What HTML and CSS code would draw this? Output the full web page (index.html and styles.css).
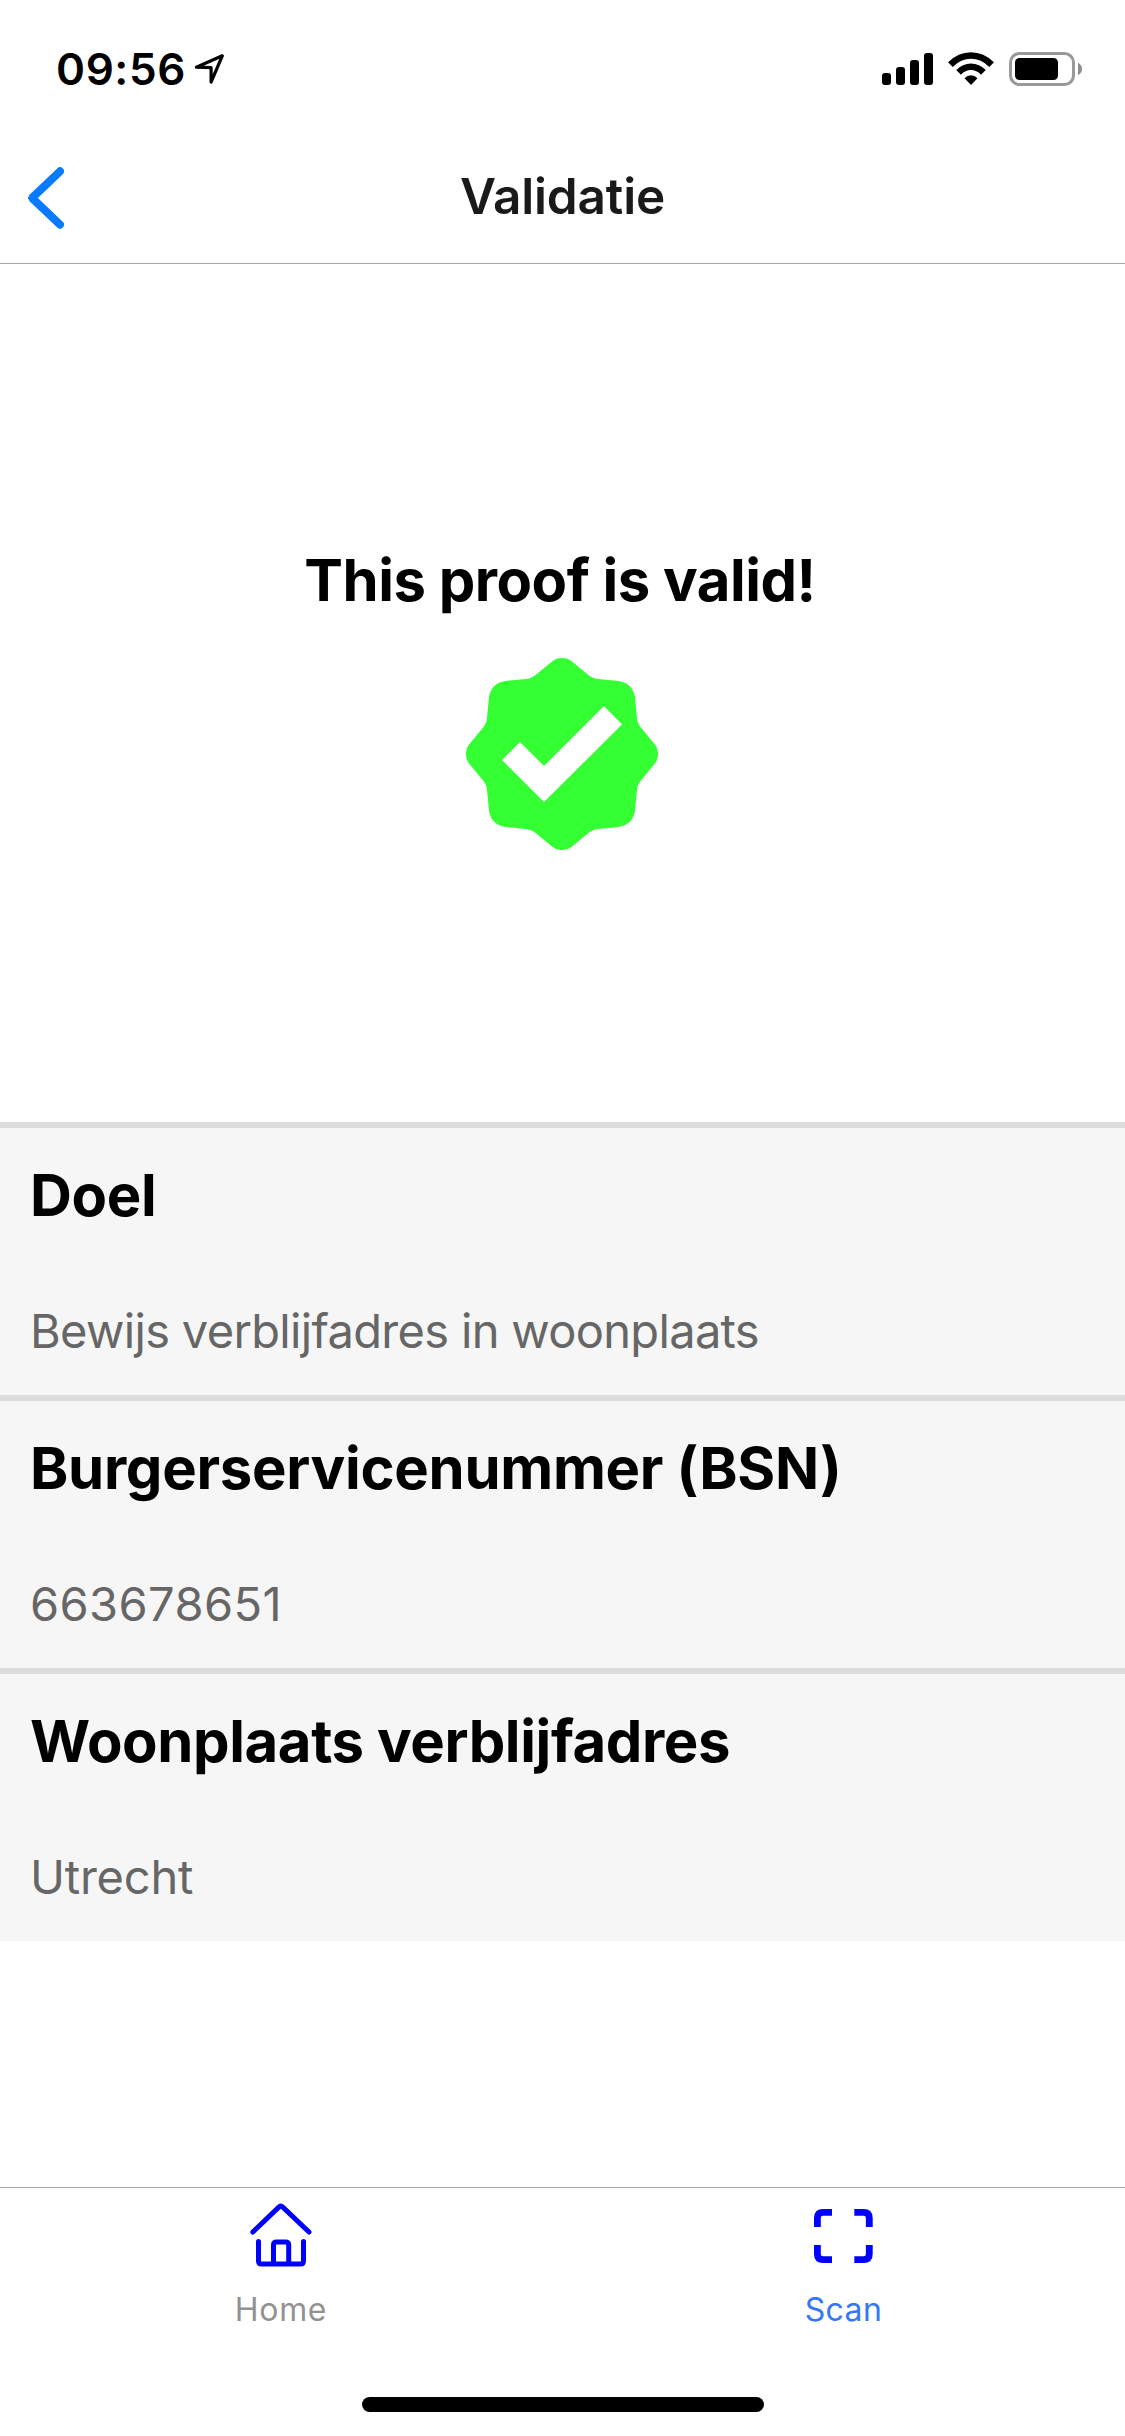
FILE: index.html
```html
<!DOCTYPE html>
<html lang="nl">
<head>
<meta charset="utf-8">
<title>Validatie</title>
<link rel="stylesheet" href="styles.css">
</head>
<body>
<div class="screen">
  <div class="status">
    <div class="status-left">
      <span class="time">09:56</span>
      <svg class="location" width="32" height="32" viewBox="0 0 32 32" fill="none" stroke="#000" stroke-width="3.2" stroke-linejoin="round"><path d="M2.4 14.2 28.3 2.8 17.1 29V14.7Z"/></svg>
    </div>
    <svg width="204" height="40" viewBox="0 0 204 40">
      <rect x="2" y="24" width="9" height="12" rx="3"/>
      <rect x="16" y="18" width="9" height="18" rx="3"/>
      <rect x="30" y="11" width="9" height="25" rx="3"/>
      <rect x="44" y="4" width="9" height="32" rx="3"/>
      <g fill="none" stroke="#000" stroke-width="6.6">
        <path d="M70.4 15.6Q79.5 6.5 91 6.5T111.6 15.6"/>
        <path d="M78.6 23.4Q84 17.8 91 17.8T103.4 23.4"/>
      </g>
      <path d="M84.5 29.3Q87.3 26.2 91 26.2T97.5 29.3L91 36Z"/>
      <rect x="130.5" y="4.5" width="63" height="31" rx="9" fill="none" stroke="#999" stroke-width="3"/>
      <rect x="135" y="9" width="43" height="22" rx="4.5"/>
      <path d="M198 13.8Q202 16 202 20T198 26.2Z" fill="#8c8c8c"/>
    </svg>
  </div>

  <header class="header">
    <svg class="back" width="36" height="62" viewBox="0 0 36 62" fill="none" stroke="#0a7aff" stroke-width="8" stroke-linecap="round" stroke-linejoin="bevel"><path d="M32 4.3 4 31 32 57.7"/><path stroke="none" fill="#0a7aff" d="M0 30.200V31.800L4 36V26Z"/></svg>
    <h1 class="title">Validatie</h1>
  </header>

  <section class="result">
    <h2 class="result-text">This proof is valid!</h2>
    <svg width="192" height="192" viewBox="0 0 192 192">
      <path fill="#33ff33" d="M96 0C100 0 103 1 106 3.5L123 17.5C126.5 20 129 20.8 132 21L152.5 23C161.5 24 168 30.5 169 39.5L171 60C171.2 63 172 65.5 174.5 69L188.5 86C191 89 192 92 192 96C192 100 191 103 188.5 106L174.5 123C172 126.500 171.200 129 171 132L169 152.5C168 161.5 161.5 168 152.5 169L132 171C129 171.2 126.500 172 123 174.5L106 188.5C103 191 100 192 96 192C92 192 89 191 86 188.5L69 174.500C65.5 172 63 171.2 60 171L39.5 169C30.5 168 24 161.5 23 152.5L21 132C20.8 129 20 126.5 17.500 123L3.5 106C1 103 0 100 0 96C0 92 1 89 3.5 86L17.5 69C20 65.5 20.8 63 21 60L23 39.5C24 30.5 30.5 24 39.5 23L60 21C63 20.8 65.5 20 69 17.5L86 3.5C89 1 92 0 96 0Z"/>
      <path fill="#fff" d="M36 102 54 84 78 108 138 48 156 66.500 78 144Z"/>
    </svg>
  </section>

  <main class="fields">
    <div class="field">
      <h3 class="label">Doel</h3>
      <p class="value value-purpose">Bewijs verblijfadres in woonplaats</p>
    </div>
    <div class="field">
      <h3 class="label label-bsn">Burgerservicenummer (BSN)</h3>
      <p class="value value-number">663678651</p>
    </div>
    <div class="field">
      <h3 class="label label-city">Woonplaats verblijfadres</h3>
      <p class="value">Utrecht</p>
    </div>
  </main>

  <footer class="footer">
    <nav class="tabs">
      <div class="tab">
        <svg width="66" height="66" viewBox="0 0 66 66" fill="none" stroke="#0000ff" stroke-width="5" stroke-linecap="round"><path d="M4.800 29 30.8 4.1Q32.8 2.300 34.8 4.1L61 29M10.500 38.500V58Q10.500 61 13.500 61H52.500Q55.500 61 55.500 58V38.500M25.500 60V42Q25.500 39 28.500 39H37.700Q40.700 39 40.700 42V60"/></svg>
        <span class="tab-name">Home</span>
      </div>
      <div class="tab tab-active">
        <svg width="67" height="66" viewBox="0 0 67 66" fill="none" stroke="#0000ff" stroke-width="6.8"><path d="M7.400 24V15Q7.400 9.400 13 9.400H22M44.300 9.400H53.700Q59.300 9.400 59.300 15V24M59.300 42V51Q59.300 56.600 53.700 56.600H44.300M22 56.600H13Q7.400 56.600 7.400 51V42"/></svg>
        <span class="tab-name">Scan</span>
      </div>
    </nav>
    <div class="home-indicator"></div>
  </footer>
</div>
</body>
</html>
```

FILE: styles.css
```css
* { box-sizing: border-box; margin: 0; padding: 0; }

body {
  background: #fff;
  color: #000;
  font-family: Inter, "Liberation Sans", sans-serif;
}

svg { display: block; flex: none; }

.screen {
  display: flex;
  flex-direction: column;
  width: 1125px;
  height: 2436px;
  overflow: hidden;
}

/* Status bar */
.status {
  display: flex;
  align-items: center;
  justify-content: space-between;
  height: 132px;
  padding: 6px 41px 0 56px;
}
.status-left { display: flex; align-items: center; gap: 8px; }
.time {
  font-size: 44px;
  font-weight: 600;
  line-height: 54px;
  letter-spacing: 0.6px;
}

/* Navigation header */
.header {
  display: grid;
  grid-template-columns: 36px 1fr 36px;
  align-items: center;
  height: 132px;
  padding: 0 28px;
  border-bottom: 1px solid #a7a7aa;
}
.title {
  padding-bottom: 3px;
  color: #1a1a1a;
  font-size: 49.5px;
  font-weight: 600;
  line-height: 60px;
  letter-spacing: -0.16px;
  text-align: center;
}

/* Validation result */
.result {
  display: flex;
  flex-direction: column;
  align-items: center;
  gap: 42px;
  height: 858px;
  padding: 280px 1px 0 0;
}
.result-text {
  padding-right: 4px;
  font-size: 58px;
  font-weight: 700;
  line-height: 72px;
  letter-spacing: -0.48px;
}

/* Disclosed attributes */
.field {
  height: 273px;
  padding: 31px 30px 0;
  background: #f6f6f6;
  border-top: 6px solid #dcdcdc;
}
.label {
  margin-bottom: 71px;
  font-size: 58px;
  font-weight: 700;
  line-height: 72px;
  letter-spacing: -0.34px;
}
.label-bsn { letter-spacing: -0.28px; }
.label-city { letter-spacing: -0.38px; }
.value {
  color: #666;
  font-size: 47px;
  line-height: 58px;
  letter-spacing: -0.22px;
}
.value-purpose { letter-spacing: -0.67px; }
.value-number { letter-spacing: 0.4px; }

/* Tab bar */
.footer {
  height: 249px;
  margin-top: auto;
  border-top: 1px solid #a7a7aa;
}
.tabs { display: grid; grid-template-columns: 562px 563px; }
.tab {
  display: flex;
  flex-direction: column;
  align-items: center;
  gap: 21px;
  padding-top: 15px;
  color: #929292;
}
.tab-active { color: #3478f6; }
.tab-name {
  font-size: 32px;
  line-height: 40px;
  letter-spacing: 0.67px;
}
.tab-active .tab-name { letter-spacing: 0.4px; }
.home-indicator {
  width: 402px;
  height: 15px;
  margin: 67px auto 0;
  border-radius: 8px;
  background: #000;
}
```
